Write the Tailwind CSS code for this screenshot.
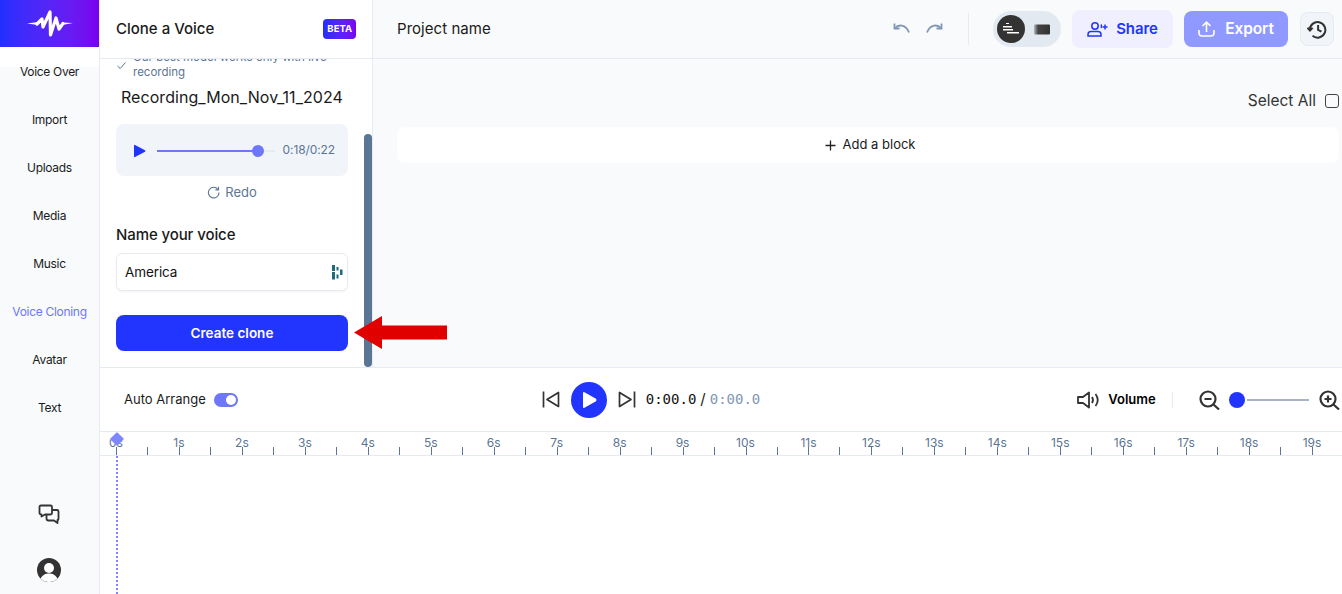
<!DOCTYPE html>
<html lang="en">
<head>
  <meta charset="UTF-8" />
  <title>Clone a Voice</title>
  <script src="https://cdn.jsdelivr.net/npm/@tailwindcss/browser@4"></script>
</head>
<body class="h-[594px] w-[1342px] overflow-hidden bg-white font-['Inter',sans-serif] text-[#1a1a1a]">
  <div class="flex h-[594px]">

    <!-- Sidebar -->
    <aside class="flex h-full w-[100px] shrink-0 flex-col border-r border-[#e6eaf2] bg-[#f8fafc]">
      <div class="flex h-[47px] items-center justify-center bg-gradient-to-r from-[#1f2fff] to-[#7a00ee]">
        <svg width="46" height="28" viewBox="0 0 46 28" fill="none"><path d="M0 13.500L11 12V15Z" fill="#fff"/><path d="M35 12.500L46 13L35 15Z" fill="#fff"/><path d="M10 14L15 9L16 17L23 2L23.500 25L29 8L32 19L36 13.500" stroke="#fff" stroke-width="3.200" stroke-linecap="round" stroke-linejoin="round"/></svg>
      </div>
      <div class="h-5 bg-white"></div>
      <nav class="-mt-[1px] flex flex-col text-center text-[12px] leading-[12px] tracking-[-0.3px]">
        <a class="h-12">Voice Over</a>
        <a class="h-12">Import</a>
        <a class="h-12">Uploads</a>
        <a class="h-12">Media</a>
        <a class="h-12">Music</a>
        <a class="h-12 text-[#6e77f8]">Voice Cloning</a>
        <a class="h-12">Avatar</a>
        <a class="h-12">Text</a>
      </nav>
      <div class="mt-auto flex flex-col items-center gap-[33px] pb-[12px] pr-[1px]">
        <svg width="22" height="22" viewBox="0 0 22 22" fill="none" stroke="#333" stroke-width="1.800" stroke-linejoin="round"><path d="M3 2.500H12.500Q14 2.500 14 4V10Q14 11.500 12.500 11.500H7L3.500 13.500V11.500Q1.500 11.500 1.500 10V4Q1.500 2.500 3 2.500Z"/><path d="M14 7H19Q20.500 7 20.500 8.500V16Q20.500 17 19.500 17V20L16 17.500H10.500Q8.500 17.500 8.500 15.500V11.500"/></svg>
        <svg width="24" height="24" viewBox="0 0 24 24"><circle cx="12" cy="12" r="12" fill="#333"/><circle cx="12" cy="10" r="5" fill="#fff"/><path d="M3.500 20.500C6 16.500 8.500 15.500 12 15.500S18 16.500 20.500 20.500A12 12 0 0 1 3.500 20.500Z" fill="#fff"/></svg>
      </div>
    </aside>

    <div class="flex min-w-0 flex-1 flex-col">
      <div class="flex h-[368px] border-b border-[#e6eaf2]">

        <!-- Clone panel -->
        <section class="relative flex w-[273px] shrink-0 flex-col border-r border-[#e6eaf2] bg-white">
          <header class="z-10 flex h-[59px] shrink-0 items-center justify-between border-b border-[#e6eaf2] bg-white pl-4 pr-4">
            <h1 class="text-[15px] font-medium">Clone a Voice</h1>
            <span class="rounded-[4px] bg-gradient-to-r from-[#1f2fff] to-[#7a00ee] px-[4px] py-[3px] text-[9.500px] leading-[14px] font-bold text-white">BETA</span>
          </header>
          <div class="h-full overflow-hidden pl-4 pr-6">
            <div class="-mt-[9px] flex gap-[6px] text-[11.500px] leading-[15px] text-[#5c7595]">
              <svg class="mt-[10px] shrink-0" width="11" height="11" viewBox="0 0 11 11" fill="none" stroke="#5c7595"><path d="M1.500 6L4.200 8.500L9.500 2.500"/></svg>
              <p>Our best model works only with live recording</p>
            </div>
            <div class="mt-[8px] pl-[5px] text-[16px] leading-[18px] tracking-[0.05px]">Recording_Mon_Nov_11_2024</div>
            <div class="mt-[18px] flex h-[52px] w-[232px] items-center rounded-[8px] bg-[#f1f4f9] pl-[17px] pr-[13px]">
              <svg class="mt-[1px]" width="13" height="14" viewBox="0 0 13 14"><path d="M1 1.500Q1 0.500 2 1L12 6.300Q13 7 12 7.700L2 13Q1 13.500 1 12.500Z" fill="#1f35ff"/></svg>
              <div class="mt-[1px] ml-[11px] flex w-[118px] items-center">
                <div class="h-[2px] w-[96px] bg-[#6e77f8]"></div>
                <div class="-ml-[1px] size-3 rounded-full bg-[#6e77f8]"></div>
                <div class="h-[2px] flex-1 bg-[#e6eaf2]"></div>
              </div>
              <span class="ml-auto text-[12px] tracking-[-0.1px] text-[#5c7595]">0:18/0:22</span>
            </div>
            <div class="mt-[7px] flex w-[232px] items-center justify-center gap-[5px] text-[13px] leading-[18px] text-[#5c7595]">
              <svg width="13" height="13" viewBox="0 0 13 13" fill="none" stroke="#5c7595" stroke-width="1.100"><path d="M11 3.500A5.300 5.300 0 1 0 12 6.500"/><path d="M11.500 0.800V3.900H8.400"/></svg>
              Redo
            </div>
            <h2 class="mt-[25px] text-[15px] leading-[18px] font-medium tracking-[-0.1px]">Name your voice</h2>
            <div class="mt-[9px] flex h-[38px] w-[232px] items-center justify-between rounded-[6px] border border-[#e6eaf2] pl-2 pr-1 shadow-[0_1px_2px_rgba(15,23,42,0.05)]">
              <span class="text-[13.500px] tracking-[-0.1px] text-[#111]">America</span>
              <svg width="11" height="15" viewBox="0 0 11 15" fill="#1f6a7c"><rect x="0" y="0" width="3" height="6"/><rect x="0" y="7" width="3" height="7.500"/><rect x="4.500" y="2" width="2" height="3.500"/><rect x="4.500" y="9.500" width="2" height="4"/><rect x="8" y="4.500" width="2.500" height="5.500"/></svg>
            </div>
            <button class="mt-[24px] h-9 w-[232px] rounded-[8px] bg-[#2235ff] text-[13.500px] font-semibold text-white">Create clone</button>
          </div>
          <!-- scrollbar -->
          <div class="absolute top-[134px] right-0 h-[233px] w-2 rounded-full bg-[#5c7595]"></div>
          <!-- annotation arrow -->
          <svg class="absolute top-[315px] left-[253px] z-20" width="95" height="35" viewBox="0 0 95 35"><path d="M1 17.500L29 1V10.500H94V24.500H29V34Z" fill="#e00000"/></svg>
        </section>

        <!-- Editor -->
        <main class="flex min-w-0 flex-1 flex-col bg-[#f8fafc]">
          <div class="flex h-[59px] shrink-0 items-center border-b border-[#e6eaf2] pl-6 pr-2">
            <span class="text-[15px] tracking-[0.05px]">Project name</span>
            <div class="ml-auto flex items-center">
              <svg width="18" height="14" viewBox="0 0 18 14" fill="none" stroke="#7f97b5" stroke-width="1.800"><path d="M1.500 1.500V6.500H6.500"/><path d="M2 6.200C5 2.500 12.500 1.500 16 10.500"/></svg>
              <svg class="ml-[14px]" width="18" height="14" viewBox="0 0 18 14" fill="none" stroke="#7f97b5" stroke-width="1.800"><path d="M16.500 1.500V6.500H11.500"/><path d="M16 6.200C13 2.500 5.500 1.500 2 10.500"/></svg>
              <div class="mr-[24px] ml-[25px] h-8 w-px bg-[#e6eaf2]"></div>
              <div class="flex h-9 w-[68px] items-center rounded-full bg-[#e3e9f1] pl-1">
                <div class="flex size-7 items-center justify-center rounded-full bg-[#333]">
                  <svg width="18" height="14" viewBox="0 0 18 14" fill="#fff"><rect x="4" y="1" width="3" height="1"/><rect x="1" y="4" width="9" height="1.500"/><rect x="1" y="7" width="10" height="1.500"/><rect x="5" y="10" width="12" height="1.500"/></svg>
                </div>
                <svg class="ml-[9px]" width="16" height="11" viewBox="0 0 16 11"><defs><linearGradient id="fade" x1="0" x2="1" y1="0" y2="0"><stop offset="0" stop-color="#b5bac2"/><stop offset="0.250" stop-color="#444"/><stop offset="1" stop-color="#333"/></linearGradient></defs><rect x="0" y="0.500" width="16" height="10" rx="1" fill="url(#fade)"/></svg>
              </div>
              <button class="ml-[11px] flex h-[38px] w-[101px] items-center justify-center gap-[8px] rounded-[8px] bg-[#efefff] text-[15px] font-semibold tracking-[-0.1px] text-[#2235ff]">
                <svg width="21" height="15" viewBox="0 0 21 15" fill="none" stroke="#2235ff" stroke-width="1.500"><circle cx="8" cy="4" r="3.200"/><path d="M1 14V12.500Q1 9.500 4 9.500H11Q14 9.500 14 12.500V14Z"/><path d="M14 2.500A3 3 0 0 1 14 6"/><path d="M18 2.500V7.500M15.500 5H20.500"/></svg>
                Share
              </button>
              <button class="ml-[11px] flex h-9 w-[104px] items-center justify-center gap-[10px] rounded-[8px] bg-[#8f99ff] text-[15.500px] font-semibold tracking-[-0.1px] text-white">
                <svg width="17" height="16" viewBox="0 0 17 16" fill="none" stroke="#fff" stroke-width="1.600"><path d="M8.500 11V1.500M4.500 5L8.500 1.200L12.500 5"/><path d="M1 9V12Q1 15 4 15H13Q16 15 16 12V9"/></svg>
                Export
              </button>
              <div class="ml-[12px] flex size-[34px] items-center justify-center rounded-[8px] border border-[#e6eaf2] bg-[#f1f4f9]">
                <svg width="20" height="19" viewBox="0 0 18 17" fill="none" stroke="#333" stroke-width="1.800"><path d="M2.500 9A7 7 0 1 1 5 14.200"/><path d="M0.500 7L2.700 9.500L5 7" fill="#333"/><path d="M10 4.500V8.800L13 10.500"/></svg>
              </div>
            </div>
          </div>
          <div class="flex items-center justify-end gap-[9px] pt-[33px] pr-[3px]">
            <span class="text-[15.500px] leading-[18px] text-[#333]">Select All</span>
            <div class="size-[14px] rounded-[3px] border-[1.500px] border-[#444]"></div>
          </div>
          <div class="mt-[17px] mr-[3px] ml-6 flex h-9 items-center justify-center gap-[7px] rounded-[8px] bg-white pl-[4px] text-[13px]">
            <svg width="11" height="11" viewBox="0 0 11 11" stroke="#222" stroke-width="1.300"><path d="M5.500 0.500V10.500M0.500 5.500H10.500"/></svg>
            Add a block
          </div>
        </main>
      </div>

      <!-- Transport -->
      <div class="flex h-[63px] shrink-0 items-center whitespace-nowrap pl-6 [&>*]:shrink-0">
        <span class="text-[13px]">Auto Arrange</span>
        <div class="ml-2 flex h-[14px] w-6 items-center justify-end rounded-full bg-[#6e77f8] pr-[2px]">
          <div class="size-[10px] rounded-full bg-white"></div>
        </div>
        <svg class="ml-[304px]" width="18" height="17" viewBox="0 0 18 17" fill="none" stroke="#333" stroke-width="1.700"><path d="M1.500 0.500V16.500"/><path d="M16.500 1.500V15.500L5 8.500Z" stroke-linejoin="round"/></svg>
        <div class="ml-[11px] flex size-9 items-center justify-center rounded-full bg-[#2235ff]">
          <svg width="16" height="18" viewBox="0 0 16 18"><path d="M2 2Q2 0.500 3.500 1.300L15 7.800Q16 9 15 10.200L3.500 16.700Q2 17.500 2 16Z" fill="#fff"/></svg>
        </div>
        <svg class="ml-[11px]" width="18" height="17" viewBox="0 0 18 17" fill="none" stroke="#333" stroke-width="1.700"><path d="M16.500 0.500V16.500"/><path d="M1.500 1.500V15.500L13 8.500Z" stroke-linejoin="round"/></svg>
        <span class="ml-[10px] font-['DejaVu_Sans_Mono',monospace] text-[14px] text-[#111]">0:00.0</span>
        <span class="mr-[4px] ml-[4px] text-[15px]">/</span>
        <span class="font-['DejaVu_Sans_Mono',monospace] text-[14px] text-[#7f97b5]">0:00.0</span>
        <svg class="ml-[317px]" width="23" height="18" viewBox="0 0 23 18" fill="none" stroke="#333" stroke-width="1.800" stroke-linejoin="round"><path d="M1 6H6L12 1.500V16.500L6 12H1Z"/><path d="M15 6Q17 9 15 12"/><path d="M18.500 3Q23 9 18.500 15"/></svg>
        <span class="ml-2 text-[13px] font-semibold text-black">Volume</span>
        <div class="ml-4 h-4 w-px bg-[#e6eaf2]"></div>
        <svg class="ml-[26px]" width="21" height="20" viewBox="0 0 21 20" fill="none" stroke="#333" stroke-width="2.200"><circle cx="9" cy="9" r="7.500"/><path d="M5.500 9H12.500M14.500 14.500L20 19.500"/></svg>
        <div class="ml-[9px] size-4 rounded-full bg-[#2235ff]"></div>
        <div class="ml-[2px] h-[2px] w-[62px] bg-[#a9b4c6]"></div>
        <svg class="ml-[10px]" width="21" height="20" viewBox="0 0 21 20" fill="none" stroke="#333" stroke-width="2.200"><circle cx="9" cy="9" r="7.500"/><path d="M5.500 9H12.500M9 5.500V12.500M14.500 14.500L20 19.500"/></svg>
      </div>

      <!-- Ruler -->
      <div id="ruler" class="relative h-[25px] shrink-0 border-y border-[#e6eaf2] bg-white"></div>
      <div class="relative flex-1 bg-white">
        <div class="absolute top-0 bottom-0 left-4 border-l-2 border-dotted border-[#7f87ff]"></div>
      </div>
    </div>
  </div>

  <script>
    const ruler = document.getElementById("ruler");
    for (let s = 0; s < 20; s++) {
      const x = 16 + s * 62.95;
      const label = document.createElement("span");
      label.className = "absolute top-[3px] -translate-x-1/2 text-[12px] leading-[16px] text-[#5c7595]";
      label.style.left = x + "px";
      label.textContent = s + "s";
      ruler.appendChild(label);

      const tick = document.createElement("div");
      tick.className = "absolute bottom-0 h-2 w-px bg-[#5c7595]";
      tick.style.left = x + "px";
      ruler.appendChild(tick);

      const half = document.createElement("div");
      half.className = "absolute bottom-0 h-2 w-px bg-[#5c7595]";
      half.style.left = x + 31 + "px";
      ruler.appendChild(half);
    }
    const marker = document.createElement("div");
    marker.className = "absolute top-[2px] left-[12px] size-[10px] rotate-45 rounded-[1px] bg-[#7f87ff]";
    ruler.appendChild(marker);
  </script>
</body>
</html>
